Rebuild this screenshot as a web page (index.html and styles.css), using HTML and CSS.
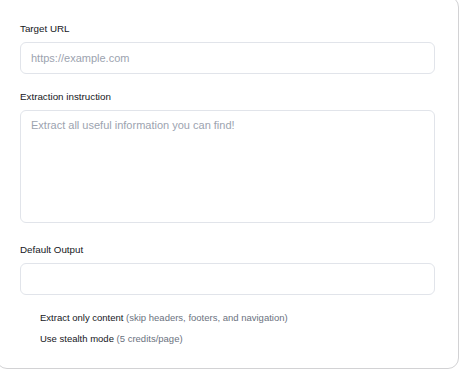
FILE: index.html
```html
<!DOCTYPE html>
<html lang="en">
<head>
    <meta charset="UTF-8">
    <meta name="viewport" content="width=device-width, initial-scale=1.0">
    <title>Scrape settings</title>
    <link rel="stylesheet" href="styles.css">
</head>
<body>
    <div class="card">
        <div class="field">
            <label class="field-label" for="url">Target URL</label>
            <input id="url" class="text-input" type="text" placeholder="https://example.com">
        </div>

        <div class="field field-area">
            <label class="field-label" for="prompt">Extraction instruction</label>
            <textarea id="prompt" class="text-area" placeholder="Extract all useful information you can find!"></textarea>
        </div>

        <div class="field">
            <label class="field-label" for="output">Default Output</label>
            <input id="output" class="text-input" type="text">
        </div>

        <div class="options">
            <div class="option">Extract only content <span class="hint">(skip headers, footers, and navigation)</span></div>
            <div class="option">Use stealth mode <span class="hint">(5 credits/page)</span></div>
        </div>
    </div>
</body>
</html>
```

FILE: styles.css
```css
:root {
    --text: #15171c;
    --muted: #6b7280;
    --placeholder: #9ca3af;
    --input-border: #e1e4ea;
    --card-border: #d2d2d4;
}

body {
    margin: 0;
    background: #fff;
    font-family: 'Liberation Sans', Arial, sans-serif;
    color: var(--text);
    overflow: hidden;
}

.card {
    width: 438px;
    margin: -4px 0 0 -4px;
    padding: 25px 0 22px 23px;
    border: 1px solid var(--card-border);
    border-radius: 11px;
    background: #fff;
    box-sizing: content-box;
}

.field {
    margin-bottom: 16px;
}

.field-area {
    margin-bottom: 20px;
}

.field-label {
    display: block;
    font-size: 9.8px;
    line-height: 14px;
    margin-bottom: 6px;
}

.text-input,
.text-area {
    display: block;
    width: 415px;
    box-sizing: border-box;
    border: 1px solid var(--input-border);
    border-radius: 6px;
    padding: 0 10px;
    font-family: inherit;
    font-size: 11px;
    color: var(--text);
    background: #fff;
    outline: none;
}

.text-input {
    height: 32px;
}

.text-area {
    height: 113px;
    padding-top: 8px;
    resize: none;
}

.text-input::placeholder,
.text-area::placeholder {
    color: var(--placeholder);
}

.options {
    padding-left: 20px;
}

.option {
    font-size: 9.5px;
    line-height: 14px;
    margin-bottom: 7px;
}

.option:last-child {
    margin-bottom: 0;
}

.hint {
    color: var(--muted);
}
```
